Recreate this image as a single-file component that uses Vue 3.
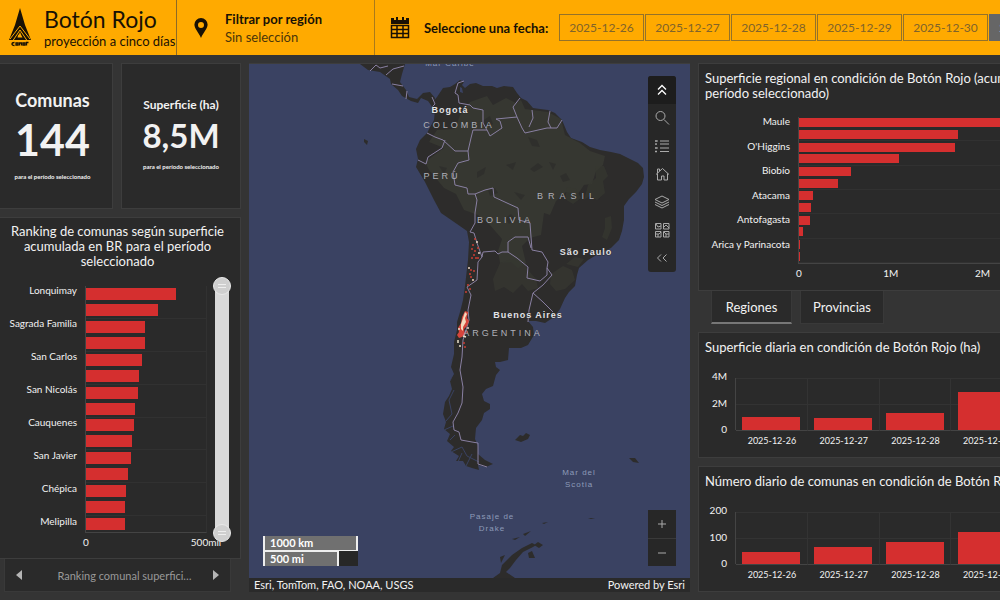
<script setup>
import { ref } from 'vue'

const dates = ['2025-12-26', '2025-12-27', '2025-12-28', '2025-12-29', '2025-12-30', '2025-12-31']
const selected = ref('2025-12-31')
const rangeStart = ref(0)
const rangeEnd = ref(100)
const tab = ref('Regiones')

const ranking = [
  ['Lonquimay', 375], ['', 302], ['Sagrada Familia', 245], ['', 245], ['San Carlos', 232],
  ['', 219], ['San Nicolás', 215], ['', 203], ['Cauquenes', 199], ['', 190],
  ['San Javier', 186], ['', 175], ['Chépica', 166], ['', 161], ['Melipilla', 161]
]
const regions = [
  ['Maule', 2.19], ['', 1.73], ["O'Higgins", 1.7], ['', 1.09], ['Biobío', 0.57], ['', 0.42],
  ['Atacama', 0.15], ['', 0.13], ['Antofagasta', 0.12], ['', 0.045], ['Arica y Parinacota', 0.014], ['', 0.014]
]
const regionMax = 2.19
const regionTicks = [[0, '0'], [1, '1M'], [2, '2M']]

const daily = [
  {
    title: 'Superficie diaria en condición de Botón Rojo (ha)', max: 4, ticks: ['4M', '2M', '0'],
    bars: [['2025-12-26', 1.03], ['2025-12-27', 0.95], ['2025-12-28', 1.31], ['2025-12-29', 2.92]]
  },
  {
    title: 'Número diario de comunas en condición de Botón Rojo', max: 200, ticks: ['200', '100', '0'],
    bars: [['2025-12-26', 47], ['2025-12-27', 64], ['2025-12-28', 84], ['2025-12-29', 123]]
  }
]

const hotspots = [
  [475, 239], [477, 242], [473, 245], [478, 248], [472, 249], [475, 251], [479, 253], [474, 255],
  [476, 258], [478, 258], [472, 258], [469, 268], [471, 270], [474, 271], [470, 274], [471, 277],
  [473, 280], [468, 285], [470, 289], [466, 292], [467, 313], [468, 328], [467, 332], [464, 343], [465, 347]
]
</script>

<template>
  <div class="page">
    <header class="top">
      <div class="brand">
        <svg class="logo" viewBox="0 0 24 40" aria-label="CONAF">
          <path d="M12 0 17 17 23 32H1L7 17Z" fill="#181105" />
          <path d="M2 31 12 18 22 31M4 34 12 22 20 34" fill="none" stroke="#ffaa00" stroke-width="1" />
          <path d="M12 24q1 3 2.500 5.500H9.500Q10 26 11 26.500z" fill="#ffaa00" />
          <path d="M6.500 34.500q-2.500 0-2.500 1.500t2.500 1.500M8 35h2v2H8zM11.500 37.500v-2.500h2v2.500M15 35h2v2h-2zM18.500 37.500v-3h2" fill="none" stroke="#181105" stroke-width="1.300" />
        </svg>
        <div>
          <h1>Botón Rojo</h1>
          <p>proyección a cinco días</p>
        </div>
      </div>
      <button class="filter" type="button">
        <svg viewBox="0 0 14 20" aria-hidden="true"><path d="M7 0a6.600 6.600 0 0 0-6.600 6.600C.4 11 4.500 14 7 20c2.500-6 6.600-9 6.600-13.400A6.600 6.600 0 0 0 7 0zm0 4a3 3 0 1 1 0 6 3 3 0 0 1 0-6z" fill="#181105" fill-rule="evenodd" /></svg>
        <span><b>Filtrar por región</b><span>Sin selección</span></span>
      </button>
      <div class="dates">
        <svg viewBox="0 0 20 22" aria-hidden="true">
          <path d="M1 1h3v2h2V0h2v3h4V0h2v3h2V1h3v6H1z" fill="#181105" />
          <path d="M1.500 8.500h17v12h-17zM1.500 12.500h17M1.500 16.500h17M7 8.500v12M13 8.500v12" fill="none" stroke="#181105" stroke-width="1.500" />
        </svg>
        <b>Seleccione una fecha:</b>
        <div class="date-list">
          <button v-for="d in dates" :key="d" type="button" :class="{ on: d === selected }" @click="selected = d">{{ d }}</button>
        </div>
      </div>
    </header>

    <main>
      <div class="col left">
        <div class="kpis">
          <section class="card kpi first">
            <h2>Comunas</h2>
            <strong>144</strong>
            <small>para el período seleccionado</small>
          </section>
          <section class="card kpi second">
            <h2>Superficie (ha)</h2>
            <strong>8,5M</strong>
            <small>para el período seleccionado</small>
          </section>
        </div>
        <section class="card ranking">
          <h2>Ranking de comunas según superficie acumulada en BR para el período seleccionado</h2>
          <div class="rank-body">
            <div class="names"><span v-for="(r, i) in ranking" :key="i">{{ r[0] }}</span></div>
            <div class="plot">
              <div v-for="(r, i) in ranking" :key="i" class="row"><i :style="{ width: r[1] / 5 + '%' }"></i></div>
              <span class="tick zero">0</span>
              <span class="tick end">500mil</span>
            </div>
            <div class="scroller">
              <input v-model="rangeStart" type="range" min="0" max="100" aria-label="Inicio del rango">
              <input v-model="rangeEnd" type="range" min="0" max="100" aria-label="Fin del rango">
            </div>
          </div>
        </section>
        <nav class="pager">
          <button type="button" aria-label="Anterior"><svg viewBox="0 0 6 10"><path d="M6 0v10L0 5z" fill="#b5b5b5" /></svg></button>
          <span>Ranking comunal superfici…</span>
          <button type="button" aria-label="Siguiente"><svg viewBox="0 0 6 10"><path d="M0 0v10l6-5z" fill="#b5b5b5" /></svg></button>
        </nav>
      </div>

      <section class="map">
        <div class="canvas">
          <svg class="world" viewBox="249 64 441 514" preserveAspectRatio="xMidYMid slice" role="img" aria-label="Mapa de Sudamérica">
            <defs>
              <clipPath id="land">
                <path d="M437 97 443 88 450 87 455 84 460 80 464 82 462 85 465 88 470 84 476 83 483 86 492 86 497 88 504 86 513 87 517 93 521 98 527 101 533 108 540 109 548 110 555 113 562 120 567 132 571 138 582 142 590 147 600 150 611 152 620 154 630 159 638 163 643 168 644 177 642 184 636 192 629 199 624 206 624 220 622 231 619 240 611 248 600 253 588 260 579 268 577 275 575 286 569 292 565 298 560 309 554 317 545 323 536 321 528 321 533 327 534 335 528 345 521 348 509 348 508 360 500 362 495 362 496 367 500 370 496 375 493 386 486 389 482 394 484 401 490 404 490 409 484 413 482 420 476 428 475 439 478 446 478 454 485 460 493 464 486 467 478 465 479 470 472 468 466 466 463 461 456 461 459 456 451 451 454 447 447 441 450 434 444 429 446 422 443 414 445 402 449 396 452 389 450 381 454 374 451 367 454 354 454 342 457 330 457 322 460 312 463 300 465 286 468 260 469 242 467 231 457 224 441 213 434 200 425 182 416 167 418 159 416 149 420 140 427 133 434 120 435 109 432 103Z" />
              </clipPath>
            </defs>
            <rect x="249" y="64" width="441" height="514" fill="#3a4262" />
            <g fill="#2d2c2b">
              <path d="M360 64H405L402 74 400 82 406 90 409 97 417 99 423 93 430 92 435 98 433 108 428 101 421 98 418 103 411 101 402 96 398 90 391 84 390 79 380 72 368 70Z" />
              <path d="M364 139l4 2-1 4-3-3z" />
              <path d="M515 440l5-5 3 1 3-3 4 2-2 4-7 3zM629 458l6 0 4 5-6-1zM493 578l7-5 2-8 10-10 10-7 10-5 4 2-3 2-10 5-7 8-6 8-4 4 9 6zM512 539l8-2-5 3zM523 534l8-3-6 5zM534 545l4-3 5 3-4 3zM500 557l5-2-4 8zM528 553l4-2 3 7-6 0zM542 523l6-1-4 2zM588 518l7 0-4 1z" />
            </g>
            <g clip-path="url(#land)">
              <rect x="400" y="64" width="250" height="410" fill="#2d2c2b" />
              <g fill="#363731">
                <path d="M470 102 487 96 493 105 506 98 516 103 521 100 525 109 548 112 561 119 565 135 580 143 590 151 605 156 603 165 596 171 592 184 584 185 578 194 566 192 556 201 550 215 544 213 541 235 530 238 522 246 526 263 518 268 511 262 500 263 498 251 502 239 489 224 478 215 464 210 456 194 444 188 429 170 425 162 444 148 429 142 437 130 455 129 460 115Z" />
                <path d="M595 166l9 0 4 10-5 5 2 12-8 7-7-4-6 4 4-15 8-7zM567 187l9 2 5 9-8 6-8-5zM605 218l6-2 1 12-5 12-5-3 3-9z" opacity=".7" />
                <path d="M500 263l12-4 12 4 5 8 7 8 2 9-10 3-6-7-9 9-9-6-9 4-2-12zM551 274l12-8 9 4 3 10-10 9-9 2-6-7zM566 264l9-7 9 2-6 8z" opacity=".8" />
              </g>
              <g fill="#2e2e2b" opacity=".75">
                <path d="M477 172l9-5-2 7-7 4zM506 165l10-3-3 8zM528 137l9 3 3 7-8-1zM530 169l8-6 5 4-9 5zM488 190l7-2 3 5-8 3zM514 192l11 3-4 5zM549 162l7 2-3 6zM482 121l8-5 3 8-8 4zM505 218l6-4 5 5-7 5zM560 176l6-3 4 7-7 2zM439 166l8 2-3 6z" />
              </g>
              <path d="M460 87l2 1 1 5-3-1z" fill="#3a4262" />
              <path d="M453 374l-3 7M454 390l-5 10 3 14-6 7M444 430l9-4M450 440l5-5M451 452l11-5 5 9 12 6M458 462l4-9M466 466l6-12" fill="none" stroke="#3a4262" stroke-width="1" />
            </g>
            <g fill="none" stroke="#8980a2" stroke-width="1" stroke-linejoin="round">
              <path d="M370 71l6-6 4 3 8-2M386 75l7-6 11-3M392 84l11 2M407 91l-1 8M432 97l3 7-3 3" />
              <path d="M464 81 458 83 455 93 458 95 459 103 470 105 473 108 483 110 483 123 487 130 473 130 471 138 468 151 455 151 443 140 435 137 427 133" />
              <path d="M445 140 442 148 428 157 426 164 418 160M468 151 469 160 458 163 453 172 455 185 467 188 468 194 475 194 485 190 493 188 494 197 507 203 518 208 519 220 530 223 531 237 532 250 542 252 548 262 547 268 552 275 543 285 533 293 529 310 528 322" />
              <path d="M475 194 477 200 475 213 475 223 470 232 474 233 477 243 482 257 478 262 477 280 467 287 471 295 468 310 469 320 463 340 462 357 460 370 463 387 462 403 458 413 453 422 454 430 459 432 461 440 472 442 478 443 478 464 487 467" />
              <path d="M482 257 483 252 495 251 498 254 502 252 508 252 508 242 515 237 528 237 531 248M508 252 517 258 528 267 527 278 540 281 547 275 547 268M533 293 543 302 553 312" />
              <path d="M487 130 490 136 502 128 500 121 496 119 517 117 513 107 520 98M517 117 522 128 525 133 547 128 557 128 562 120M532 110 533 118 529 127M550 111 548 122 551 128" />
            </g>
            <circle v-for="(p, i) in hotspots" :key="i" :cx="p[0]" :cy="p[1]" r="1" :fill="i % 5 === 1 ? '#ead2c1' : '#c93e35'" />
            <path d="M465 311l3 1-1 6 2 3-2 5-3 3 1 5-3 3-3 1-2-3 2-3-1-4 3-5 1-6z" fill="#d6463c" />
            <path d="M465 312l2 2-2 4 1 4-3 5 0 4-2-2 0-5 2-6z" fill="#f3d9bd" />
            <path d="M459 328v2M463 336l3 1M458 340v3M460 345v2" stroke="#e9dfca" stroke-width="1.500" />
            <g class="city">
              <text x="450" y="113">Bogotá</text>
              <text x="586" y="255">São Paulo</text>
              <text x="528" y="318">Buenos Aires</text>
            </g>
            <g class="country">
              <text x="459" y="128">COLOMBIA</text>
              <text x="442" y="179">PERÚ</text>
              <text x="568" y="199" class="wide">BRASIL</text>
              <text x="505" y="223">BOLIVIA</text>
              <text x="503" y="336">ARGENTINA</text>
            </g>
            <g class="sea">
              <text x="450" y="66">Mar Caribe</text>
              <text x="579" y="475">Mar del</text><text x="579" y="487">Scotia</text>
              <text x="492" y="519">Pasaje de</text><text x="492" y="531">Drake</text>
            </g>
          </svg>
          <div class="tools">
            <button type="button" aria-label="Contraer"><svg viewBox="0 0 16 16"><path d="M4 7.500l4-4 4 4M4 12.500l4-4 4 4" stroke="#fff" stroke-width="1.300" /></svg></button>
            <button type="button" aria-label="Buscar"><svg viewBox="0 0 16 16"><circle cx="6.500" cy="6" r="4.500" /><path d="M10 9.500l5 5" /></svg></button>
            <button type="button" aria-label="Leyenda"><svg viewBox="0 0 16 16"><path d="M6 3h9M6 6h9M6 10h9M6 13.500h9M2 2v2M2 5.500v1.500M2 9v2M2 12.500v2" /><path d="M1 3h3M1 6h2M1 10h3M1 13.500h2" /></svg></button>
            <button type="button" aria-label="Inicio"><svg viewBox="0 0 16 16"><path d="M2 8.500 8.500 2.500 15 8.500M3.500 7.500v6.500h4v-4h2.500v4h3.500V7.500M3.500 7V3h2v2" /></svg></button>
            <button type="button" aria-label="Capas"><svg viewBox="0 0 16 16"><path d="M8 2l7 3.500-7 3.500-7-3.500zM1 8l7 3.500L15 8M1 10.500 8 14l7-3.500" /></svg></button>
            <button type="button" aria-label="Mapas base"><svg viewBox="0 0 16 16"><path d="M1.500 1.500h5.500v5.500H1.500zM9.500 1.500H15v5.500H9.500zM1.500 9.500h5.500v5.500H1.500zM9.500 9.500H15v5.500H9.500zM2 2l2 3 3-1M10 5l2-2 3 3M2 12h3l2-2M10 10l2 2v3M12 12h3M4 12v3" /></svg></button>
            <button type="button" aria-label="Ocultar"><svg viewBox="0 0 16 16"><path d="M7 4.500 3.500 8 7 11.500M12.500 4.500 9 8l3.500 3.500" /></svg></button>
          </div>
          <div class="zoom">
            <button type="button" aria-label="Acercar"><svg viewBox="0 0 16 16"><path d="M8 4v8M4 8h8" /></svg></button>
            <button type="button" aria-label="Alejar"><svg viewBox="0 0 16 16"><path d="M4 8h8" /></svg></button>
          </div>
          <div class="scale"><span class="km">1000 km</span><span class="mi">500 mi</span></div>
        </div>
        <footer><span>Esri, TomTom, FAO, NOAA, USGS</span><span>Powered by <a href="#">Esri</a></span></footer>
      </section>

      <div class="col right">
        <section class="card regional">
          <h2>Superficie regional en condición de Botón Rojo (acumulada<br>período seleccionado)</h2>
          <div class="reg-body">
            <div class="names"><span v-for="(r, i) in regions" :key="i">{{ r[0] }}</span></div>
            <div class="plot">
              <div v-for="(r, i) in regions" :key="i" class="row"><i :style="{ width: r[1] / regionMax * 100 + '%' }"></i></div>
              <span v-for="t in regionTicks" :key="t[1]" class="tick" :style="{ left: t[0] / regionMax * 100 + '%' }">{{ t[1] }}</span>
            </div>
          </div>
        </section>
        <nav class="tabs">
          <button v-for="t in ['Regiones', 'Provincias']" :key="t" type="button" :class="{ on: t === tab }" @click="tab = t">{{ t }}</button>
        </nav>
        <section v-for="c in daily" :key="c.title" class="card daily">
          <h2>{{ c.title }}</h2>
          <div class="day-body">
            <div class="axis"><span v-for="t in c.ticks" :key="t">{{ t }}</span></div>
            <div class="days">
              <div v-for="b in c.bars" :key="b[0]" class="day">
                <div class="slot"><i :style="{ height: b[1] / c.max * 100 + '%' }"></i></div>
                <span>{{ b[0] }}</span>
              </div>
            </div>
          </div>
        </section>
      </div>
    </main>
  </div>
</template>

<style>
body { margin: 0; background: #343434; }
</style>

<style scoped>
* { box-sizing: border-box; }
.page { height: 100vh; min-height: 600px; display: flex; flex-direction: column; overflow: hidden; background: #343434; color: #f2f2f2; font-family: Lato, "Liberation Sans", sans-serif; font-size: 12px; }
h1, h2, p { margin: 0; font-weight: 400; }
button { font: inherit; color: inherit; background: none; border: 0; padding: 0; cursor: pointer; }

.top { height: 55px; flex: none; display: flex; background: #ffaa00; color: #181105; }
.brand { width: 177px; flex: none; display: flex; gap: 12px; padding: 5px 0 0 8px; border-right: 1px solid #8d6a26; white-space: nowrap; }
.logo { width: 24px; height: 40px; margin-top: 3px; flex: none; }
h1 { font-size: 23px; line-height: 28px; }
.brand p { font-size: 13px; line-height: 16px; }
.filter { width: 198px; flex: none; display: flex; align-items: center; gap: 17px; padding: 0 0 0 17px; border-right: 1px solid #a97a1c; text-align: left; white-space: nowrap; }
.filter svg { width: 14px; height: 20px; flex: none; }
.filter > span { display: flex; flex-direction: column; font-size: 13px; line-height: 18px; }
.filter > span span { color: #4a3509; }
.dates { flex: 1; min-width: 0; display: flex; align-items: center; padding-left: 15px; white-space: nowrap; overflow: hidden; }
.dates svg { width: 20px; height: 22px; flex: none; margin-right: 14px; }
.dates b { width: 135px; flex: none; font-size: 13px; }
.date-list { display: flex; gap: 1px; }
.date-list button { width: 85px; height: 27px; flex: none; border: 1px solid #94722a; color: #80632b; font-size: 12px; }
.date-list .on { background: #666; border-color: #666; color: #fff; }

main { flex: 1; min-height: 0; display: grid; grid-template-columns: minmax(0, 241fr) minmax(0, 441fr) minmax(0, 302fr); gap: 8px; padding: 8px 0; }
.col { display: flex; flex-direction: column; min-height: 0; }
.card { background: #2a2a2a; border: 1px solid #3d3d3d; overflow: hidden; }
.kpis { display: grid; grid-template-columns: 113fr 120fr; gap: 8px; height: 146px; margin-bottom: 8px; }
.kpi { display: flex; flex-direction: column; align-items: center; white-space: nowrap; }
.kpi small { font-size: 6px; line-height: 8px; font-weight: 700; }
.first { padding: 25px 7px 0 0; }
.first h2 { font-size: 18px; line-height: 22px; font-weight: 700; }
.first strong { font-size: 43px; line-height: 58px; }
.first small { margin-top: 4px; }
.second { padding-top: 33px; }
.second h2 { font-size: 12px; line-height: 16px; font-weight: 700; }
.second strong { font-size: 33px; line-height: 45px; }
.second small { margin-top: 5px; }
.kpi.first, .card.ranking { border-left: 0; }

.ranking { flex: 1; min-height: 0; display: flex; flex-direction: column; padding: 6px 9px 25px 0; }
.ranking h2 { font-size: 13px; line-height: 15px; text-align: center; padding-left: 4px; }
.rank-body { flex: 1; min-height: 0; display: flex; margin-top: 17px; }
.names { display: flex; flex-direction: column; margin: -2px 8px 2px 0; text-align: right; white-space: nowrap; font-size: 10px; line-height: 12px; }
.names span { flex: 1; min-height: 0; }
.ranking .names { width: 77px; flex: none; }
.plot { position: relative; flex: 1; display: flex; flex-direction: column; border-left: 1px solid #444; border-bottom: 1px solid #444; }
.ranking .plot { border-right: 1px solid #313131; }
.row { flex: 1; min-height: 0; display: flex; align-items: center; }
.row:nth-child(even) { border-bottom: 1px solid #313131; }
.row i { height: 12px; background: #d52f2f; }
.tick { position: absolute; top: 100%; margin-top: 4px; font-size: 10px; line-height: 12px; transform: translateX(-50%); }
.zero { left: 0; }
.end { left: 100%; }
.scroller { position: relative; width: 18px; flex: none; margin: -9px 0 -9px 6px; }
.scroller::before { content: ""; position: absolute; inset: 9px 2px; background: #d9d9d9; }
.scroller input { position: absolute; inset: 0; width: 18px; height: 100%; margin: 0; appearance: none; background: none; writing-mode: vertical-lr; pointer-events: none; }
.scroller input::-webkit-slider-thumb { appearance: none; width: 18px; height: 18px; border-radius: 50%; border: 1px solid #e8e8e8; background: linear-gradient(#eee, #eee) center 6px / 8px 1px no-repeat, linear-gradient(#eee, #eee) center 9px / 8px 1px no-repeat, #cfcfcf; pointer-events: auto; }
.pager { flex: none; height: 33px; margin: 0 10px 0 4px; display: flex; align-items: center; justify-content: space-between; padding: 0 11px; background: #2a2a2a; border: 1px solid #393939; border-top: 0; color: #999; font-size: 11px; white-space: nowrap; }
.pager button { width: 6px; height: 10px; display: flex; }
.pager span { margin-left: 14px; }

.map { display: flex; flex-direction: column; min-height: 0; }
.canvas { position: relative; flex: 1; min-height: 0; overflow: hidden; border-top: 1px solid #3d3d3d; }
.world { display: block; width: 100%; height: 100%; }
.world text { font-family: "Liberation Sans", Arial, sans-serif; text-anchor: middle; }
.city text { font-size: 9px; font-weight: 700; letter-spacing: 1px; fill: #e2e2e6; stroke: #2b2b2b; stroke-width: 1px; paint-order: stroke; }
.country text { font-size: 9px; letter-spacing: 3px; fill: #b0b0b8; }
.country .wide { letter-spacing: 5px; }
.sea text { font-size: 8px; letter-spacing: 1px; fill: #8d9bb8; }
.tools { position: absolute; right: 14px; top: 12px; display: flex; flex-direction: column; background: #272727; border-radius: 3px; overflow: hidden; }
.tools button, .zoom button { width: 28px; height: 28px; display: flex; align-items: center; justify-content: center; }
.tools button:first-child { background: #1d1d1d; }
.tools svg, .zoom svg { width: 16px; height: 16px; fill: none; stroke: #aaa; stroke-width: 1; }
.zoom { position: absolute; right: 14px; bottom: 12px; background: #272727; }
.zoom button + button { border-top: 1px solid #3a3a3a; }
.scale { position: absolute; left: 14px; bottom: 12px; width: 95px; display: flex; flex-direction: column; background: #272727; font-size: 11px; line-height: 14px; font-weight: 700; color: #fff; }
.scale span { padding-left: 5px; background: #707070; border-left: 2px solid #eee; border-right: 2px solid #eee; }
.km { border-bottom: 1px solid #eee; }
.mi { width: 76px; border-top: 1px solid #eee; }
.map footer { flex: none; height: 14px; display: flex; justify-content: space-between; padding: 0 5px; background: #2a2a2a; font-size: 11px; line-height: 13px; white-space: nowrap; }
.map a { color: inherit; text-decoration: none; }

.right h2 { font-size: 13px; line-height: 15px; padding-left: 6px; white-space: nowrap; }
.right .card { border-right: 0; }
.regional { flex: 1 1 228px; min-height: 0; display: flex; flex-direction: column; padding: 7px 0 26px; }
.reg-body { flex: 1; min-height: 0; display: flex; margin-top: 16px; }
.regional .names { width: 91px; flex: none; }
.regional .row i { height: 9px; }
.tabs { flex: none; height: 33px; display: flex; gap: 8px; padding-left: 13px; margin-bottom: 8px; }
.tabs button { width: 81px; background: #2a2a2a; border: 1px solid #393939; border-top: 0; font-size: 13px; }
.tabs button + button { width: 84px; }
.tabs .on { border-bottom: 2px solid #777; }
.daily { flex: 1 1 126px; min-height: 0; display: flex; flex-direction: column; padding-top: 7px; }
.daily + .daily { margin-top: 8px; }
.day-body { flex: 1; min-height: 0; display: flex; margin-top: 23px; padding-bottom: 10px; }
.axis { width: 28px; flex: none; display: flex; flex-direction: column; justify-content: space-between; margin: -8px 8px 12px 0; text-align: right; font-size: 10px; line-height: 12px; }
.days { flex: 1; min-width: 0; display: flex; overflow: hidden; border-left: 1px solid #444; border-image: linear-gradient(#444 75%, transparent 75%) 1; }
.day { flex: 0 0 27.2%; display: flex; flex-direction: column; align-items: center; font-size: 9px; line-height: 12px; }
.slot { flex: 1; min-height: 0; width: 100%; display: flex; align-items: flex-end; justify-content: center; border-bottom: 1px solid #444; border-right: 1px solid #333; background: linear-gradient(#333, #333) 0 0 / 100% 1px no-repeat, linear-gradient(#333, #333) 0 50% / 100% 1px no-repeat; }
.slot i { width: 82%; background: #d52f2f; }
.day span { margin-top: 4px; }
</style>
